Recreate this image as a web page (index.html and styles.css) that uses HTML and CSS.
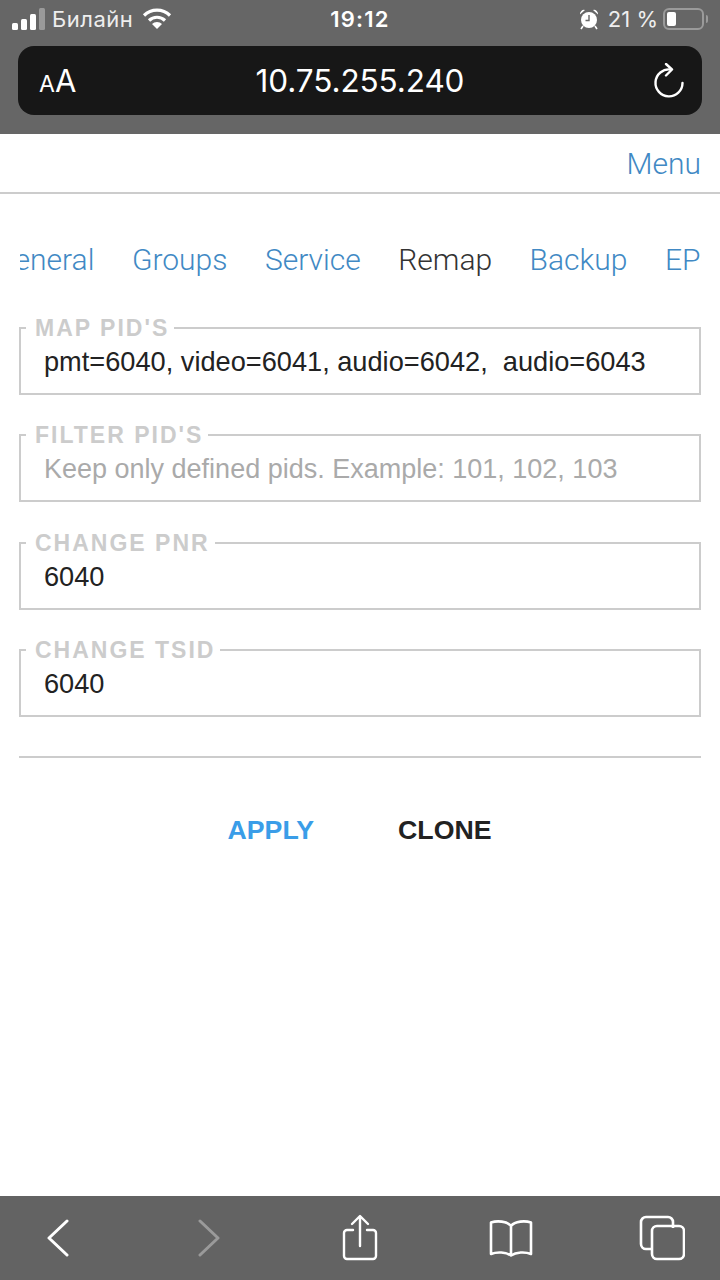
FILE: index.html
```html
<!DOCTYPE html>
<html lang="ru">
<head>
<meta charset="utf-8">
<title>10.75.255.240</title>
<link rel="stylesheet" href="styles.css">
</head>
<body>
<div class="app">
  <header class="chrome">
    <div class="status">
      <div class="status-left">
        <svg class="signal" width="36" height="22" viewBox="0 0 36 22"><rect x="0" y="15" width="6" height="7" rx="1.5" fill="#fff"/><rect x="9" y="11" width="6" height="11" rx="1.5" fill="#fff"/><rect x="18" y="6" width="6" height="16" rx="1.5" fill="#fff"/><rect x="27" y="0" width="6" height="22" rx="1.5" fill="#9a9a9a"/></svg>
        <span class="carrier">Билайн</span>
        <svg class="wifi" width="30" height="22" viewBox="0 0 30 22"><path d="M2 7.5a18.5 18.5 0 0 1 26 0" fill="none" stroke="#fff" stroke-width="3.2"/><path d="M7 12.5a11.5 11.5 0 0 1 16 0" fill="none" stroke="#fff" stroke-width="3.2"/><path d="M15 21l-5-5a7 7 0 0 1 10 0z" fill="#fff"/></svg>
      </div>
      <div class="clock">19:12</div>
      <div class="status-right">
        <svg class="alarm" width="20" height="22" viewBox="0 0 20 22"><circle cx="10" cy="12" r="8" fill="#fff"/><path d="M10 7v5.5H6.5" fill="none" stroke="#666" stroke-width="1.4"/><path d="M1 6.500a4 4 0 0 1 5-4.500zM19 6.500a4 4 0 0 0-5-4.500z" fill="#fff"/><path d="M4 18l-2 3M16 18l2 3" stroke="#fff" stroke-width="1.6"/></svg>
        <span class="battery-pct">21 %</span>
        <div class="battery"><div class="battery-level"></div></div>
        <div class="battery-cap"></div>
      </div>
    </div>
    <div class="address">
      <span class="aa"><span class="aa-small">A</span>A</span>
      <span class="url">10.75.255.240</span>
      <div class="reload-slot">
        <svg class="reload" width="32" height="36" viewBox="0 0 32 36"><path d="M17.500 6.500A13.500 13.500 0 1 0 29.500 20" fill="none" stroke="#fff" stroke-width="2.400" stroke-linecap="round"/><path d="M13 1l6 5.500-6 6" fill="none" stroke="#fff" stroke-width="2.400" stroke-linecap="round" stroke-linejoin="round"/></svg>
      </div>
    </div>
  </header>

  <main class="page">
    <div class="topbar"><a class="menu-link">Menu</a></div>
    <nav class="tabs">
      <div class="tabs-track">
        <a class="tab">General</a>
        <a class="tab">Groups</a>
        <a class="tab">Service</a>
        <a class="tab tab-active">Remap</a>
        <a class="tab">Backup</a>
        <a class="tab">EPG</a>
      </div>
    </nav>
    <form class="form">
      <fieldset class="field"><legend class="field-label">MAP PID'S</legend><div class="field-value">pmt=6040, video=6041, audio=6042,&nbsp; audio=6043</div></fieldset>
      <fieldset class="field"><legend class="field-label">FILTER PID'S</legend><div class="field-value placeholder">Keep only defined pids. Example: 101, 102, 103</div></fieldset>
      <fieldset class="field"><legend class="field-label">CHANGE PNR</legend><div class="field-value">6040</div></fieldset>
      <fieldset class="field"><legend class="field-label">CHANGE TSID</legend><div class="field-value">6040</div></fieldset>
    </form>
    <div class="actions">
      <a class="action action-primary">APPLY</a>
      <a class="action">CLONE</a>
    </div>
  </main>

  <footer class="toolbar">
    <div class="tool"><svg width="26" height="38" viewBox="0 0 26 38"><path d="M22 2L4 19l18 17" fill="none" stroke="#fff" stroke-width="3" stroke-linecap="round" stroke-linejoin="round"/></svg></div>
    <div class="tool"><svg width="26" height="38" viewBox="0 0 26 38"><path d="M4 2l18 17L4 36" fill="none" stroke="#9a9a9a" stroke-width="3" stroke-linecap="round" stroke-linejoin="round"/></svg></div>
    <div class="tool"><svg width="38" height="48" viewBox="0 0 38 48"><path d="M12 16H6a3 3 0 0 0-3 3v23a3 3 0 0 0 3 3h26a3 3 0 0 0 3-3V19a3 3 0 0 0-3-3h-6" fill="none" stroke="#fff" stroke-width="2.400" stroke-linecap="round"/><path d="M19 32V3M11 10l8-8 8 8" fill="none" stroke="#fff" stroke-width="2.400" stroke-linecap="round" stroke-linejoin="round"/></svg></div>
    <div class="tool"><svg width="44" height="38" viewBox="0 0 44 38"><path d="M22 7C18 2 8 1.500 2 3.500V35c6-2.500 15-2 20 1.500C27 33 36 32.500 42 35V3.500C36 1.500 26 2 22 7zM22 7v29" fill="none" stroke="#fff" stroke-width="2.600" stroke-linejoin="round"/></svg></div>
    <div class="tool"><svg width="46" height="46" viewBox="0 0 46 46"><path d="M34 13V7a5 5 0 0 0-5-5H7a5 5 0 0 0-5 5v22a5 5 0 0 0 5 5h6" fill="none" stroke="#fff" stroke-width="2.600"/><rect x="13" y="11" width="32" height="33" rx="5" fill="none" stroke="#fff" stroke-width="2.600"/></svg></div>
  </footer>
</div>
</body>
</html>
```

FILE: styles.css
```css
* { box-sizing: border-box; }
html, body { margin: 0; padding: 0; }
body { width: 720px; height: 1280px; overflow: hidden; background: #fff; font-family: "Liberation Sans", Arial, sans-serif; }
.app { display: flex; flex-direction: column; height: 1280px; }

.chrome { height: 134px; background: #666; color: #fff; padding: 0 18px; font-family: Inter, "Noto Sans", sans-serif; }
.status { height: 46px; display: flex; align-items: center; justify-content: space-between; padding-bottom: 8px; }
.status-left { display: flex; align-items: center; width: 240px; margin-left: -6px; }
.signal { margin-right: 4px; }
.carrier { font-size: 22px; color: #eee; letter-spacing: .5px; }
.wifi { margin-left: 9px; }
.clock { font-size: 22px; font-weight: 600; letter-spacing: 1.2px; }
.status-right { width: 240px; display: flex; align-items: center; justify-content: flex-end; margin-right: -6px; }
.battery-pct { font-size: 22px; margin: 0 5px 0 9px; color: #eee; white-space: nowrap; }
.battery { width: 41px; height: 22px; border: 2px solid #9a9a9a; border-radius: 6px; padding: 2px; }
.battery-level { width: 9px; height: 100%; background: #fff; border-radius: 2px; }
.battery-cap { width: 2px; height: 8px; background: #9a9a9a; margin-left: 2px; border-radius: 0 2px 2px 0; }

.address { height: 69px; background: #171717; border-radius: 16px; display: flex; align-items: center; padding: 0 17px 0 21px; }
.aa { flex: 1; font-size: 31px; }
.aa-small { font-size: 23px; }
.url { font-size: 31.5px; letter-spacing: -.1px; margin-left: -4px; }
.reload-slot { flex: 1; display: flex; justify-content: flex-end; }
.reload { display: block; }

.page { flex: 1; background: #fff; min-height: 0; }
.topbar { height: 60px; border-bottom: 2px solid #ccc; display: flex; align-items: center; justify-content: flex-end; padding: 0 19px 0 0; }
.menu-link { font-family: Roboto, sans-serif; font-weight: 300; font-size: 30px; color: #4189c4; }
.tabs { margin: 43px 18px 0 20px; overflow: hidden; }
.tabs-track { display: flex; gap: 37.5px; margin-left: -26px; white-space: nowrap; font-family: Roboto, sans-serif; font-weight: 300; font-size: 30px; line-height: 46px; }
.tab { color: #4189c4; }
.tab-active { color: #333; }

.form { margin: 0 19px; padding-top: 34px; border-bottom: 2px solid #ccc; height: 475px; }
.field { margin: 0 0 29.3px; padding: 0 0 0 5px; height: 78px; border: 2px solid #ccc; min-width: 0; }
.field-label { padding: 0 5px 0 9px; font-size: 23px; line-height: 22px; font-weight: 700; letter-spacing: 2px; color: #ccc; }
.field-value { font-size: 27.2px; line-height: 32px; padding: 7px 0 0 18px; color: #222; white-space: pre; }
.placeholder { font-size: 27px; color: #aaa; }

.actions { display: flex; justify-content: center; gap: 84px; padding-top: 57px; margin-left: -1px; }
.action { font-size: 26.7px; line-height: 30px; font-weight: 700; color: #222; }
.action-primary { color: #3a9de8; }

.toolbar { height: 84px; background: #636363; display: flex; align-items: center; justify-content: space-between; padding: 0 35px; }
.tool { width: 46px; display: flex; justify-content: center; }
```
